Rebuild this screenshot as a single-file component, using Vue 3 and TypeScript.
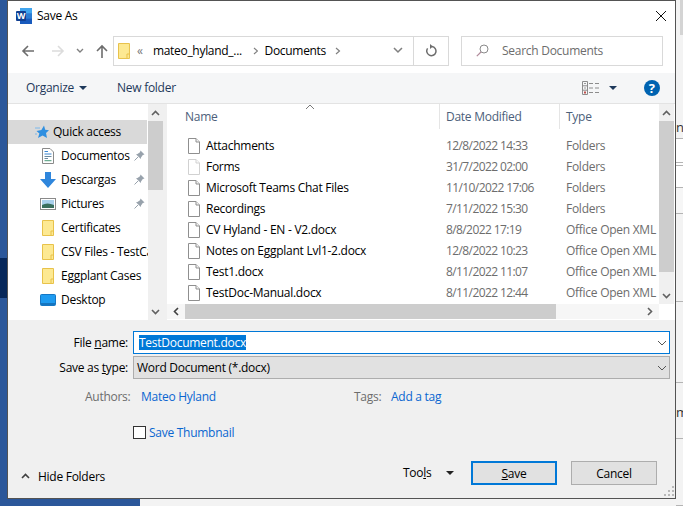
<script setup lang="ts">
interface NavItem {
  label: string;
  icon: string;
  pinned?: boolean;
  active?: boolean;
}

interface FileRow {
  name: string;
  date: string;
  type: string;
  faded?: boolean;
}

const navItems: NavItem[] = [
  { label: 'Quick access', icon: 'star', active: true },
  { label: 'Documentos', icon: 'doc', pinned: true },
  { label: 'Descargas', icon: 'down', pinned: true },
  { label: 'Pictures', icon: 'pic', pinned: true },
  { label: 'Certificates', icon: 'folder' },
  { label: 'CSV Files - TestCases', icon: 'folder' },
  { label: 'Eggplant Cases', icon: 'folder' },
  { label: 'Desktop', icon: 'desktop' },
];

const files: FileRow[] = [
  { name: 'Attachments', date: '12/8/2022 14:33', type: 'Folders' },
  { name: 'Forms', date: '31/7/2022 02:00', type: 'Folders', faded: true },
  { name: 'Microsoft Teams Chat Files', date: '11/10/2022 17:06', type: 'Folders' },
  { name: 'Recordings', date: '7/11/2022 15:30', type: 'Folders' },
  { name: 'CV Hyland - EN - V2.docx', date: '8/8/2022 17:19', type: 'Office Open XML' },
  { name: 'Notes on Eggplant Lvl1-2.docx', date: '12/8/2022 10:23', type: 'Office Open XML' },
  { name: 'Test1.docx', date: '8/11/2022 11:07', type: 'Office Open XML' },
  { name: 'TestDoc-Manual.docx', date: '8/11/2022 12:44', type: 'Office Open XML' },
];

// rows of the window that sits behind the dialog
const behindRows = [
  { h: 139, bg: '#f3f3f3', text: 'nc', up: 2 },
  { h: 24, bg: '#ffffff', text: '', up: 0 },
  { h: 3, bg: '#ffffff', text: '', up: 0 },
  { h: 22, bg: '#ffffff', text: '', up: 0 },
  { h: 26, bg: '#f6f6f6', text: '', up: 0 },
  { h: 88, bg: '#f3f3f3', text: '', up: 0 },
  { h: 81, bg: '#f3f3f3', text: '', up: 0 },
  { h: 56, bg: '#f3f3f3', text: 'm', up: 17 },
  { h: 67, bg: '#f3f3f3', text: '', up: 0 },
];

const gripDots = [
  [8, 0], [4, 4], [8, 4], [0, 8], [4, 8], [8, 8],
];
</script>

<template>
  <div class="screen">
    <div class="desk-blue"><div class="desk-band"></div></div>
    <div class="behind">
      <div v-for="(row, i) in behindRows" :key="i" class="behind-row" :style="{ height: row.h + 'px', background: row.bg }">
        <span v-if="row.text" class="behind-text" :style="{ bottom: row.up + 'px' }">{{ row.text }}</span>
      </div>
      <div class="behind-thumb"></div>
    </div>

    <div class="dialog">
      <div class="titlebar">
        <svg class="word" width="16" height="16" viewBox="0 0 16 16">
          <rect x="4" y="0" width="12" height="16" rx="1" fill="#2b7cd3" />
          <rect x="4" y="0" width="12" height="5.3" fill="#41a5ee" />
          <rect x="4" y="10.7" width="12" height="5.3" fill="#185abd" />
          <rect x="0" y="3" width="10" height="10" rx="1" fill="#103f91" />
          <text x="5" y="11.2" text-anchor="middle" font-size="9" font-weight="700" fill="#fff" font-family="Open Sans, sans-serif">W</text>
        </svg>
        <span class="title">Save As</span>
        <svg class="close" width="12" height="12" viewBox="0 0 12 12">
          <path d="M1 1 L11 11 M11 1 L1 11" stroke="#111" stroke-width="1" fill="none" />
        </svg>
      </div>

      <div class="addressrow">
        <svg class="nav-arrow" width="14" height="14" viewBox="0 0 14 14">
          <path d="M13 7 H2 M7 2 L2 7 L7 12" stroke="#6d6d6d" stroke-width="1.6" fill="none" />
        </svg>
        <svg class="nav-arrow forward" width="14" height="14" viewBox="0 0 14 14">
          <path d="M1 7 H12 M7 2 L12 7 L7 12" stroke="#dcdcdc" stroke-width="1.6" fill="none" />
        </svg>
        <svg class="recent" width="8" height="6" viewBox="0 0 8 6">
          <path d="M1 1 L4 4 L7 1" stroke="#808080" stroke-width="1.4" fill="none" />
        </svg>
        <svg class="nav-arrow up" width="14" height="14" viewBox="0 0 14 14">
          <path d="M7 14 V2 M2 7 L7 2 L12 7" stroke="#6d6d6d" stroke-width="1.6" fill="none" />
        </svg>
        <div class="address">
          <svg class="folder-sm" width="12" height="16" viewBox="0 0 12 16">
            <path d="M.5 .5 H11.5 V15.5 H.5 Z" fill="#fde992" stroke="#e8c24a" />
            <path d="M9 15 V11 H11.5" fill="none" stroke="#e8c24a" />
          </svg>
          <span class="crumb-more">«</span>
          <span class="crumb">mateo_hyland_...</span>
          <svg class="sep" width="6" height="8" viewBox="0 0 6 8"><path d="M1 1 L4.5 4 L1 7" stroke="#808080" stroke-width="1.2" fill="none" /></svg>
          <span class="crumb docs">Documents</span>
          <svg class="sep" width="6" height="8" viewBox="0 0 6 8"><path d="M1 1 L4.5 4 L1 7" stroke="#808080" stroke-width="1.2" fill="none" /></svg>
          <svg class="addr-chev" width="10" height="7" viewBox="0 0 10 7"><path d="M1 1 L5 5 L9 1" stroke="#808080" stroke-width="1.6" fill="none" /></svg>
          <div class="refresh">
            <svg width="12" height="13" viewBox="0 0 12 13">
              <path d="M7 2.5 A4.6 4.6 0 1 1 2.6 4.4" stroke="#6d6d6d" stroke-width="1.5" fill="none" />
              <path d="M5 0 L8 2.6 L5 5 Z" fill="#6d6d6d" />
            </svg>
          </div>
        </div>
        <div class="search">
          <svg width="13" height="13" viewBox="0 0 13 13">
            <circle cx="8" cy="5" r="4" stroke="#8a8a8a" fill="none" />
            <path d="M5 8 L.8 12.2" stroke="#b08a9a" stroke-width="1.2" />
          </svg>
          <span>Search Documents</span>
        </div>
      </div>

      <div class="toolbar">
        <span class="tool organize">Organize</span>
        <i class="caret dark"></i>
        <span class="tool newfolder">New folder</span>
        <svg class="views" width="17" height="14" viewBox="0 0 17 14">
          <path d="M.5 .5 H5.5 V13.5 H.5 Z M.5 4.8 H5.5 M.5 9.2 H5.5" stroke="#8c8c8c" fill="none" />
          <path d="M2 2.5 H4 M2 7 H4" stroke="#9a9a9a" />
          <rect x="2" y="10.5" width="2" height="2" fill="#c0504d" />
          <path d="M7 2.5 H11 M13 2.5 H17 M7 7 H11 M13 7 H17 M7 11.5 H11 M13 11.5 H17" stroke="#8c8c8c" />
        </svg>
        <i class="caret dark views-caret"></i>
        <div class="help">?</div>
      </div>

      <div class="main">
        <div class="navpane">
          <div v-for="item in navItems" :key="item.label" class="navrow" :class="{ active: item.active }">
            <svg v-if="item.icon === 'star'" class="navicon star" width="14" height="14" viewBox="0 0 14 14">
              <path d="M9 .5 L10.2 4.8 L14 5.2 L11 8 L12 13 L7.6 10.4 L3 13 L4.4 8.4 L1.5 6 L6.4 5 Z" fill="#2f8fe0" />
              <path d="M0 3 H5 M0 9 H2" stroke="#7ab8ec" />
            </svg>
            <svg v-else-if="item.icon === 'doc'" class="navicon" width="12" height="16" viewBox="0 0 12 16">
              <path d="M.5 .5 H8 L11.5 4 V15.5 H.5 Z" fill="#fff" stroke="#8a8a8a" />
              <path d="M2.5 3.5 H6 M2.5 6 H9.5" stroke="#3a86d0" />
              <path d="M2.5 8.5 H9.5 M2.5 10.5 H6" stroke="#6a8aa0" />
              <path d="M2.5 12.7 H9.5" stroke="#4a9a7a" />
            </svg>
            <svg v-else-if="item.icon === 'down'" class="navicon wide" width="16" height="16" viewBox="0 0 16 16">
              <path d="M5 0 H11 V7 H16 L8 16 L0 7 H5 Z" fill="#2f86dc" />
            </svg>
            <svg v-else-if="item.icon === 'pic'" class="navicon wide" width="16" height="12" viewBox="0 0 16 12">
              <rect x=".5" y=".5" width="15" height="11" fill="#fff" stroke="#8a8a8a" />
              <rect x="2" y="2" width="12" height="8" fill="#a9d0ec" />
              <path d="M2 7 Q7 4 14 7 V10 H2 Z" fill="#3a6f5e" />
            </svg>
            <svg v-else-if="item.icon === 'folder'" class="navicon" width="12" height="16" viewBox="0 0 12 16">
              <path d="M.5 .5 H11.5 V15.5 H.5 Z" fill="#fde992" stroke="#e8c24a" />
              <path d="M9 15 V11 H11.5" fill="none" stroke="#e8c24a" />
            </svg>
            <svg v-else class="navicon wide" width="16" height="12" viewBox="0 0 16 12">
              <rect x=".5" y=".5" width="15" height="11" rx="1" fill="#1e9bf0" stroke="#1577c4" />
              <path d="M1 10 H15" stroke="#0d4f8c" />
            </svg>
            <span class="navlabel">{{ item.label }}</span>
            <svg v-if="item.pinned" class="pin" width="11" height="11" viewBox="0 0 11 11">
              <path d="M6.5 .5 L10.5 4.5 L8.8 5 L7 7.5 L6.8 9 L2 4.2 L3.5 4 L6 2.2 Z" fill="#98a2ac" />
              <path d="M4 7 L.5 10.5" stroke="#98a2ac" />
            </svg>
          </div>
        </div>
        <div class="vscroll nav-scroll">
          <svg class="sb-arrow" width="9" height="6" viewBox="0 0 9 6"><path d="M1 5 L4.5 1.5 L8 5" stroke="#606060" stroke-width="1.6" fill="none" /></svg>
          <div class="thumb navthumb"></div>
          <svg class="sb-arrow bottom" width="9" height="6" viewBox="0 0 9 6"><path d="M1 1 L4.5 4.5 L8 1" stroke="#606060" stroke-width="1.6" fill="none" /></svg>
        </div>
        <div class="splitter"></div>

        <div class="listpane">
          <div class="listbody">
            <div class="listarea">
              <div class="listhead">
                <div class="col name-col">Name</div>
                <div class="col ruled">Date Modified</div>
                <div class="col ruled">Type</div>
                <svg class="sortcaret" width="10" height="6" viewBox="0 0 10 6"><path d="M1 5 L5 1 L9 5" stroke="#7a7a7a" fill="none" /></svg>
              </div>
              <div v-for="file in files" :key="file.name" class="filerow">
                <div class="filename">
                  <svg width="12" height="16" viewBox="0 0 12 16" :class="{ faded: file.faded }">
                    <path d="M.5 .5 H8 L11.5 4 V15.5 H.5 Z" fill="#fff" stroke="#8f8f8f" />
                    <path d="M8 .5 V4 H11.5" fill="#f3f3f3" stroke="#8f8f8f" />
                  </svg>
                  <span>{{ file.name }}</span>
                </div>
                <div class="cell date">{{ file.date }}</div>
                <div class="cell">{{ file.type }}</div>
              </div>
            </div>
            <div class="vscroll list-scroll">
              <svg class="sb-arrow" width="9" height="6" viewBox="0 0 9 6"><path d="M1 5 L4.5 1.5 L8 5" stroke="#606060" stroke-width="1.6" fill="none" /></svg>
              <div class="thumb listthumb"></div>
              <svg class="sb-arrow bottom" width="9" height="6" viewBox="0 0 9 6"><path d="M1 1 L4.5 4.5 L8 1" stroke="#606060" stroke-width="1.6" fill="none" /></svg>
            </div>
          </div>
          <div class="hscroll">
            <div class="harrow">
              <svg width="6" height="9" viewBox="0 0 6 9"><path d="M5 1 L1.5 4.5 L5 8" stroke="#404040" stroke-width="1.6" fill="none" /></svg>
            </div>
            <div class="hthumb"></div>
            <div class="harrow right">
              <svg width="6" height="9" viewBox="0 0 6 9"><path d="M1 1 L4.5 4.5 L1 8" stroke="#606060" stroke-width="1.6" fill="none" /></svg>
            </div>
            <div class="corner"></div>
          </div>
        </div>
      </div>

      <div class="footer">
        <div class="fieldrow">
          <label class="fieldlabel">File <u>n</u>ame:</label>
          <div class="input">
            <span class="selected">TestDocument.docx</span>
            <svg class="combo-chev" width="10" height="6" viewBox="0 0 10 6"><path d="M1 1 L5 5 L9 1" stroke="#555" fill="none" /></svg>
          </div>
        </div>
        <div class="fieldrow second">
          <label class="fieldlabel">Save as <u>t</u>ype:</label>
          <div class="input select">
            <span>Word Document (*.docx)</span>
            <svg class="combo-chev" width="10" height="6" viewBox="0 0 10 6"><path d="M1 1 L5 5 L9 1" stroke="#555" fill="none" /></svg>
          </div>
        </div>
        <div class="metarow">
          <span class="metalabel authors">Authors:</span>
          <a class="link author">Mateo Hyland</a>
          <span class="metalabel tags">Tags:</span>
          <a class="link">Add a tag</a>
        </div>
        <div class="thumbrow">
          <span class="checkbox"></span>
          <a class="link">Save Thumbnail</a>
        </div>
        <div class="actions">
          <div class="hidefolders">
            <svg width="9" height="6" viewBox="0 0 9 6"><path d="M1 5 L4.5 1.5 L8 5" stroke="#404040" stroke-width="1.6" fill="none" /></svg>
            <span>Hide Folders</span>
          </div>
          <span class="tools">Too<u>l</u>s</span>
          <i class="caret black"></i>
          <button class="btn primary"><u>S</u>ave</button>
          <button class="btn">Cancel</button>
        </div>
        <div class="grip">
          <i v-for="(d, i) in gripDots" :key="i" :style="{ left: d[0] + 'px', top: d[1] + 'px' }"></i>
        </div>
      </div>
    </div>
  </div>
</template>

<style scoped>
.screen {
  position: relative;
  width: 683px;
  height: 506px;
  overflow: hidden;
  background: #f3f3f3;
  font-family: "Open Sans", "Noto Sans", sans-serif;
  font-size: 12px;
  letter-spacing: -0.27px;
  color: #000;
}

.desk-blue {
  position: absolute;
  left: 0;
  top: 0;
  width: 140px;
  height: 506px;
  background: #2b579a;
}

.desk-band {
  position: absolute;
  left: 0;
  top: 258px;
  width: 8px;
  height: 40px;
  background: #06275a;
}

.behind {
  position: absolute;
  left: 676px;
  top: 0;
  width: 7px;
}

.behind-row {
  position: relative;
  box-sizing: border-box;
  border-bottom: 1px solid #b4b4b4;
  overflow: hidden;
}

.behind-text {
  position: absolute;
  left: 0;
  font-size: 13px;
  color: #333;
}

.behind-thumb {
  position: absolute;
  right: 0;
  top: 0;
  width: 3px;
  height: 35px;
  background: #d4d4d4;
}

.dialog {
  position: absolute;
  left: 7px;
  top: 0;
  box-sizing: border-box;
  width: 669px;
  height: 499px;
  border: 1px solid rgba(40, 40, 40, 0.8);
  background: #fff;
  display: flex;
  flex-direction: column;
}

.titlebar {
  height: 29px;
  flex: none;
  display: flex;
  align-items: center;
  padding-left: 8px;
}

.title {
  margin-left: 5px;
  flex: 1;
}

.close {
  margin-right: 8px;
}

.addressrow {
  height: 43px;
  flex: none;
  display: flex;
  align-items: center;
  padding: 0 11px 2px 13px;
  box-sizing: border-box;
}

.nav-arrow.forward {
  margin-left: 16px;
}

.recent {
  margin-left: 11px;
}

.nav-arrow.up {
  margin-left: 11px;
}

.address {
  margin-left: 4px;
  width: 336px;
  height: 30px;
  box-sizing: border-box;
  border: 1px solid #d9d9d9;
  display: flex;
  align-items: center;
  padding-left: 4px;
}

.crumb-more {
  margin-left: 7px;
  color: #777;
  width: 16px;
}

.crumb {
  width: 92px;
  letter-spacing: -0.3px;
}

.crumb.docs {
  width: 66px;
  letter-spacing: -0.3px;
}

.sep {
  margin: 0 6px 0 8px;
}

.crumb.docs + .sep {
  margin: 0 9px 0 5px;
}

.addr-chev {
  margin-left: 43px;
}

.refresh {
  margin-left: 10px;
  width: 34px;
  height: 100%;
  border-left: 1px solid #d9d9d9;
  display: flex;
  align-items: center;
  justify-content: center;
}

.search {
  margin-left: 12px;
  width: 202px;
  height: 30px;
  box-sizing: border-box;
  border: 1px solid #d9d9d9;
  display: flex;
  align-items: center;
  gap: 13px;
  padding-left: 14px;
  color: #6d6d6d;
}

.toolbar {
  height: 30px;
  flex: none;
  background: #f5f6f7;
  display: flex;
  align-items: center;
  padding-left: 18px;
}

.tool {
  color: #1e395b;
  margin-bottom: 1px;
}

.caret {
  width: 0;
  height: 0;
  border-left: 4px solid transparent;
  border-right: 4px solid transparent;
  border-top: 4px solid #1e395b;
  margin-left: 5px;
}

.caret.black {
  border-top-color: #222;
}

.newfolder {
  margin-left: 30px;
}

.views {
  margin-left: 406px;
}

.views-caret {
  margin-left: 10px;
}

.help {
  margin-left: 27px;
  width: 16px;
  height: 16px;
  border-radius: 50%;
  background: #0063b1;
  color: #fff;
  font-weight: 700;
  font-size: 13px;
  line-height: 16px;
  text-align: center;
  letter-spacing: 0;
}

.main {
  height: 217px;
  flex: none;
  box-sizing: border-box;
  border-top: 1px solid #e3e3e3;
  display: flex;
}

.navpane {
  width: 140px;
  flex: none;
  padding-top: 16px;
  box-sizing: border-box;
  overflow: hidden;
}

.navrow {
  position: relative;
  height: 24px;
  display: flex;
  align-items: center;
  padding-left: 34px;
}

.navrow.active {
  width: 139px;
  box-sizing: border-box;
  background: #d9d9d9;
  padding-left: 27px;
}

.navicon {
  flex: none;
  width: 12px;
}

.navicon.wide {
  width: 16px;
  margin-left: -2px;
  margin-right: -2px;
}

.navicon.star {
  width: 14px;
  margin-right: 4px;
}

.navlabel {
  margin-left: 7px;
  margin-bottom: 2px;
  white-space: nowrap;
}

.navrow.active .navlabel {
  margin-left: 0;
}

.pin {
  position: absolute;
  left: 126px;
  top: 6px;
}

.vscroll {
  position: relative;
  flex: none;
  width: 15px;
  background: #f0f0f0;
}

.sb-arrow {
  position: absolute;
  left: 3px;
  top: 6px;
}

.sb-arrow.bottom {
  top: auto;
  bottom: 5px;
}

.thumb {
  position: absolute;
  left: 0;
  width: 15px;
  background: #cdcdcd;
}

.navthumb {
  top: 17px;
  height: 69px;
}

.listthumb {
  top: 17px;
  height: 151px;
}

.splitter {
  width: 4px;
  flex: none;
  background: #f0f0f0;
}

.listpane {
  flex: 1;
  min-width: 0;
  display: flex;
  flex-direction: column;
}

.listbody {
  height: 200px;
  display: flex;
}

.listarea {
  width: 492px;
  flex: none;
  overflow: hidden;
}

.listhead {
  position: relative;
  height: 31px;
  display: grid;
  grid-template-columns: 272px 120px 100px;
  color: #4c607a;
}

.col {
  height: 25px;
  line-height: 25px;
  box-sizing: border-box;
  padding-left: 6px;
}

.name-col {
  padding-left: 18px;
}

.ruled {
  border-left: 1px solid #e5e5e5;
}

.sortcaret {
  position: absolute;
  left: 138px;
  top: 0;
}

.filerow {
  height: 21px;
  display: grid;
  grid-template-columns: 272px 120px 100px;
  align-items: center;
  white-space: nowrap;
}

.filename {
  display: flex;
  align-items: center;
  gap: 6px;
  padding-left: 21px;
}

.faded {
  opacity: 0.4;
}

.cell {
  padding-left: 7px;
  color: #6d6d6d;
  overflow: hidden;
}

.cell.date {
  letter-spacing: -0.6px;
}

.hscroll {
  height: 15px;
  display: flex;
  background: #f6f6f6;
}

.harrow {
  width: 18px;
  flex: none;
  display: flex;
  align-items: center;
  justify-content: center;
}

.harrow.right {
  width: 103px;
  justify-content: flex-end;
  padding-right: 6px;
  box-sizing: border-box;
}

.hthumb {
  width: 371px;
  flex: none;
  background: #cdcdcd;
}

.corner {
  flex: 1;
  background: #fff;
}

.footer {
  position: relative;
  flex: 1;
  background: #f0f0f0;
  padding-top: 11px;
}

.fieldrow {
  display: flex;
  align-items: center;
  height: 23px;
}

.fieldrow.second {
  margin-top: 2px;
}

.fieldlabel {
  width: 120px;
  text-align: right;
  flex: none;
}

.input {
  margin-left: 5px;
  position: relative;
  width: 537px;
  height: 23px;
  box-sizing: border-box;
  border: 1px solid #0078d7;
  background: #fff;
  display: flex;
  align-items: center;
  padding-left: 5px;
}

.input.select {
  border-color: #adadad;
  background: #e1e1e1;
  padding-left: 3px;
}

.selected {
  background: #0078d7;
  color: #fff;
  line-height: 15px;
  height: 15px;
}

.combo-chev {
  position: absolute;
  right: 2px;
  top: 8px;
}

.metarow {
  margin-top: 8px;
  height: 18px;
  display: flex;
  align-items: center;
  padding-left: 77px;
}

.metalabel {
  color: #6d6d6d;
}

.authors {
  width: 56px;
}

.author {
  width: 213px;
}

.tags {
  width: 37px;
}

.link {
  color: #0a66d0;
}

.thumbrow {
  margin-top: 21px;
  height: 13px;
  display: flex;
  align-items: center;
  padding-left: 125px;
  gap: 3px;
}

.checkbox {
  width: 13px;
  height: 13px;
  box-sizing: border-box;
  border: 1px solid #333;
  background: #fff;
}

.actions {
  margin-top: 22px;
  display: flex;
  align-items: flex-start;
  padding-left: 13px;
}

.hidefolders {
  width: 382px;
  display: flex;
  align-items: center;
  gap: 8px;
  margin-top: 6px;
  height: 18px;
}

.tools {
  line-height: 24px;
  width: 43px;
}

.actions .caret {
  margin: 10px 17px 0 0;
}

.btn {
  width: 86px;
  height: 24px;
  box-sizing: border-box;
  border: 1px solid #adadad;
  background: #e1e1e1;
  font: inherit;
  letter-spacing: inherit;
  color: #000;
  padding: 0;
  margin-right: 14px;
}

.btn.primary {
  border: 2px solid #0078d7;
}

.grip {
  position: absolute;
  right: 1px;
  bottom: 2px;
  width: 10px;
  height: 10px;
}

.grip i {
  position: absolute;
  width: 2px;
  height: 2px;
  background: #b8b8b8;
}
</style>

<style>
html, body {
  margin: 0;
  background: #f3f3f3;
}
</style>
